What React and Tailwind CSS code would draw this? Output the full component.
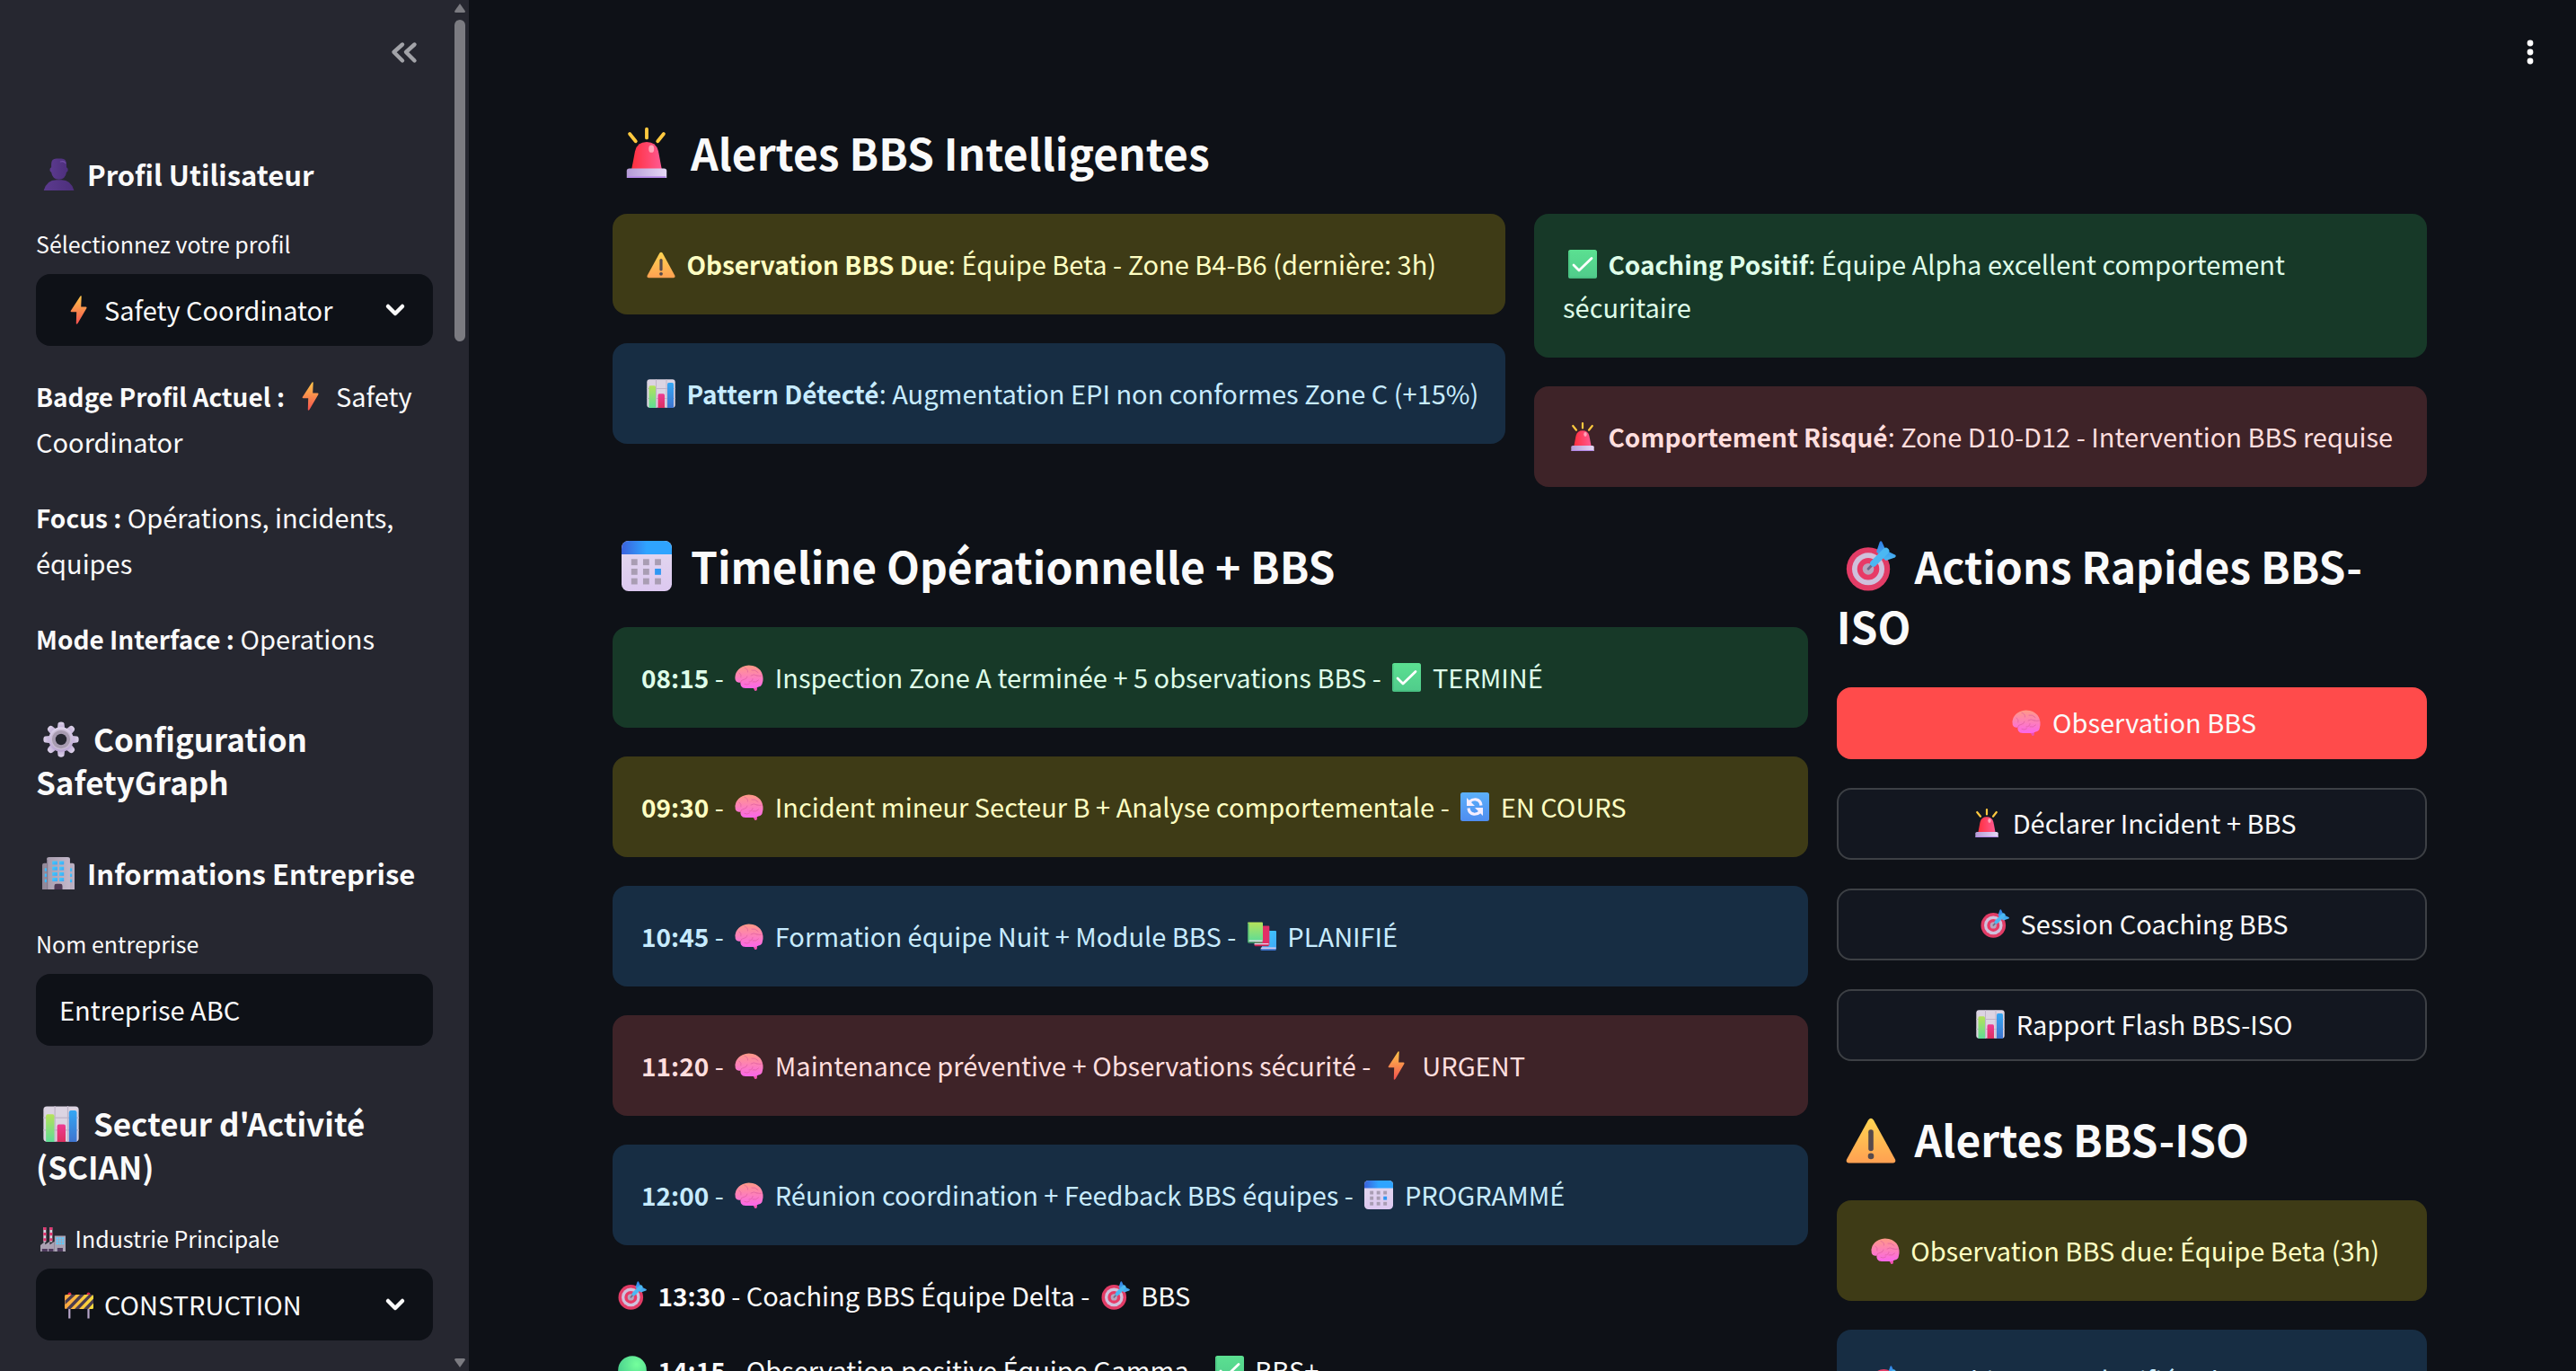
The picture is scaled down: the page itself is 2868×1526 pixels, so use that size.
import React from "react";

const stroke = { fill: "none", strokeLinecap: "round", strokeLinejoin: "round" };

const GEAR_ANGLES = [0, 45, 90, 135, 180, 225, 270, 315];
const THREE = [0, 1, 2];
const FOUR = [0, 1, 2, 3];

function Gradients() {
  const linear = (id, from, to, x2 = "0", y2 = "1") => (
    <linearGradient id={id} x1="0" y1="0" x2={x2} y2={y2}>
      <stop offset="0" stopColor={from} />
      <stop offset="1" stopColor={to} />
    </linearGradient>
  );
  return (
    <svg className="absolute size-0" aria-hidden="true">
      <defs>
        {linear("g-bust", "#5b3a8e", "#4d2f7c", "1", "0")}
        {linear("g-bolt", "#ffc64a", "#f4504f")}
        {linear("g-gear", "#ddd3ea", "#b8a3d0")}
        {linear("g-wall", "#8f8696", "#bdb2c4", "1", "0")}
        {linear("g-tower", "#a79dae", "#c3b8ca", "1", "0")}
        {linear("g-window", "#3fd0ff", "#3fa5f5", "1", "1")}
        {linear("g-green", "#b6e35a", "#5fdc96")}
        {linear("g-red", "#ee3b93", "#dc3060")}
        {linear("g-blue", "#35a7f4", "#3f74cf")}
        {linear("g-dome", "#ff2f3d", "#ff5a93", "1", "0")}
        {linear("g-base", "#b49bd6", "#e6d9f7", "1", "0")}
        {linear("g-warn", "#ffd552", "#ffa052")}
        {linear("g-check", "#5be091", "#50cb8b")}
        {linear("g-brain", "#ff9a86", "#fb66ea", "0", "1")}
        {linear("g-caltop", "#3b62dc", "#2fa4ff", ".5", "0")}
        {linear("g-cal", "#e3d9ee", "#dcc8f0")}
        {linear("g-cycle", "#5cb0fb", "#4f8df0")}
        {linear("g-bar", "#ffa63f", "#f8dc3c", "1", "0")}
        {linear("g-dart", "#2f7fe6", "#4bb8f2", "0", "1")}
        <radialGradient id="g-dot" cx=".65" cy=".3" r=".8">
          <stop offset="0" stopColor="#74ff9c" />
          <stop offset="1" stopColor="#43c98b" />
        </radialGradient>
      </defs>
    </svg>
  );
}

const DRAWINGS = {
  bust: (
    <g fill="url(#g-bust)">
      <path d="M9 6Q9 .5 14 .5H19Q24 .5 24 6V9Q25.5 9.500 25.500 11.500T24 14Q23 21 16.500 21T9 14Q7.500 13.500 7.500 11.500T9 9Z" />
      <path d="M1.500 32Q4.500 21.500 14 21.500H19Q28.500 21.500 31.500 32Z" />
      <path d="M18 3.500Q22 2.500 23 5" stroke="#7450a8" strokeWidth="1" {...stroke} />
    </g>
  ),
  bolt: (
    <path
      fill="url(#g-bolt)"
      d="M17.500.600Q18.800-.400 18.700 1L18.200 12.600H23.600Q25.200 12.800 24.300 14.200L14.500 31Q13 32.600 12.800 31L13.200 18.200H7.500Q6 18 6.900 16.700Z"
    />
  ),
  gear: (
    <g>
      <g fill="url(#g-gear)">
        {GEAR_ANGLES.map((a) => (
          <path key={a} transform={`rotate(${a} 16 16)`} d="M12.500 8L13.200 2Q13.500 .3 16 .3T18.800 2L19.500 8Z" />
        ))}
        <circle cx="16" cy="16" r="11" />
      </g>
      <circle cx="16" cy="16" r="6.800" fill="none" stroke="#a79bb0" strokeWidth="3.600" />
      <circle cx="16" cy="16" r="8.600" fill="none" stroke="#c9bcd3" strokeWidth="1" />
      <circle cx="16" cy="16" r="5" fill="#262730" />
    </g>
  ),
  building: (
    <g>
      <path fill="url(#g-wall)" d="M0 8Q0 6 2 6H30Q32 6 32 8V32H0Z" />
      <path fill="url(#g-tower)" d="M4.500 2Q4.500 0 7 0H25Q27.500 0 27.500 2V32H4.500Z" />
      <path d="M5 32V2.500" stroke="#80778a" strokeWidth="1" />
      <g fill="url(#g-window)">
        {FOUR.map((r) => (
          <g key={r}>
            <rect x="10" y={4 + r * 5.5} width="5" height="3.500" />
            <rect x="17" y={4 + r * 5.5} width="4.500" height="3.500" />
          </g>
        ))}
        {THREE.map((r) => (
          <g key={r}>
            <rect x="2.500" y={11 + r * 5.5} width="2" height="3" />
            <rect x="27.500" y={11 + r * 5.5} width="2" height="3" />
          </g>
        ))}
      </g>
      <path fill="#4d3a55" d="M12 32V28.500Q12 26.500 14 26.500H18Q20 26.500 20 28.500V32Z" />
    </g>
  ),
  chart: (
    <g>
      <rect x=".3" y=".3" width="31.400" height="31.400" rx="3" fill="#dcd4e2" />
      <path d="M10.500 0V32M22 0V32M0 10.500H32M0 21.500H32" stroke="#bfb4c8" strokeWidth="1" />
      <path fill="url(#g-green)" d="M2.500 9Q2.500 7.300 4 7.300H8.500Q10 7.300 10 9V32H3Q2.500 32 2.500 31Z" />
      <path fill="url(#g-red)" d="M12.500 18Q12.500 16.300 14 16.300H18.500Q20 16.300 20 18V32H12.500Z" />
      <path fill="url(#g-blue)" d="M23 6Q23 4 24.500 4H28.500Q30 4 30 6V32H23Z" />
    </g>
  ),
  factory: (
    <g>
      <path d="M5.500 20V1M13.500 20V1" stroke="#d9d3de" strokeWidth="3.400" />
      <path d="M5.500 1V20M13.500 1V20" stroke="#e2336f" strokeWidth="3.400" strokeDasharray="3.600 3.400" />
      <path fill="#aaa0b2" d="M0 32V24L6 19V23L12 19V23L18 19V32Z" />
      <rect x="18" y="12" width="14" height="20" fill="#a9a3b4" />
      <rect x="20" y="14" width="10" height="9" fill="#5ecbff" />
      <path d="M23.300 14V23M26.700 14V23M20 17H30M20 20H30" stroke="#a9a3b4" strokeWidth="1" />
      <path fill="#4d3a5c" d="M2 32V28.500H9V32ZM10.500 32V28.500H16.500V32ZM21.500 32V27.500H28.500V32Z" />
    </g>
  ),
  barrier: (
    <g>
      <path d="M5.300 18V31.500M26.500 18V31.500" stroke="#b6a5c9" strokeWidth="2.200" />
      <circle cx="5.500" cy="4.500" r="2" fill="#d8284c" />
      <circle cx="26.500" cy="4.500" r="2" fill="#d8284c" />
      <rect x="0" y="5" width="32" height="16" rx="1.500" fill="url(#g-bar)" />
      <path fill="#4a3c50" d="M7.500 5H12.500L.5 16V11.500ZM17 5H22L6.500 21H1.500ZM27 5H31.500L16 21H11ZM32 9.500V14.500L26 21H21Z" />
    </g>
  ),
  siren: (
    <g>
      <path d="M16 1V6.500M5.200 4L9 8.700M26.800 4L23 8.700" stroke="#ffc93f" strokeWidth="2.200" {...stroke} />
      <path fill="url(#g-dome)" d="M6.300 27L8.600 15Q10 9.200 16 9.200T23.400 15L25.700 27Z" />
      <ellipse cx="19" cy="13.500" rx="1.700" ry="2.400" fill="#ffc3cf" opacity=".75" />
      <path fill="url(#g-base)" d="M3.300 27.500Q3.300 26 5 26H27Q28.700 26 28.700 27.500V32H3.300Z" />
      <path d="M3.800 31.500H28.200" stroke="#b489ea" strokeWidth="1" />
    </g>
  ),
  warning: (
    <g>
      <path fill="url(#g-warn)" d="M14.300 3.800Q16 1.500 17.700 3.800L31.500 29Q32 31 30 31.200H2Q0 31 .5 29Z" />
      <path d="M16 11.500V22" stroke="#564a4c" strokeWidth="3.200" {...stroke} />
      <circle cx="16" cy="26.800" r="1.900" fill="#564a4c" />
    </g>
  ),
  check: (
    <g>
      <rect width="32" height="32" rx="2.500" fill="url(#g-check)" />
      <path d="M1 2V30M2 31H30" stroke="#3fae74" strokeWidth="1" opacity=".7" />
      <path d="M6 17L12 23L26 9.500" stroke="#fff" strokeWidth="2.800" {...stroke} />
    </g>
  ),
  brain: (
    <g>
      <path d="M19 25L22.500 31Q25 31.500 25 29L24.500 25Z" fill="#f04fae" />
      <path
        fill="url(#g-brain)"
        d="M7 25.500Q6 23 6.500 21.500Q2 22.500 .8 19Q-.3 15 1.500 11Q4 6 9 4Q14 1.500 20 3Q27 4.500 30 10.500Q32.500 16 31 21.500Q30.500 26 26.500 26.500Q23 28.500 19 28H12Q8.500 28 7 25.500Z"
      />
      <path
        d="M6.500 21.500Q7 18.500 10 18.500Q13.500 18 14 15M5 11Q8 13 7 16M11 5.500Q15 6.500 14.500 10M19 8Q23 7 26 10.500M18 14Q21 11.500 25 14M25 14Q28 15 30.500 14M16 21Q20 21 20 17.500M20 21Q24 22 26.500 19M11 23.500Q14 25 16.500 23"
        stroke="#dc5c9d"
        strokeWidth="1"
        opacity=".65"
        {...stroke}
      />
    </g>
  ),
  calendar: (
    <g>
      <rect width="32" height="32" rx="4.500" fill="url(#g-cal)" />
      <path fill="url(#g-caltop)" d="M0 8.600V5Q0 0 5 0H27Q32 0 32 5V8.600Z" />
      {THREE.map((r) =>
        THREE.map((c) => (
          <rect
            key={`${r}${c}`}
            x={6.2 + c * 7.5}
            y={11.6 + r * 6.1}
            width="3.900"
            height="3.900"
            fill={r === 1 && c === 2 ? "#2f97f3" : "#a99db3"}
          />
        ))
      )}
    </g>
  ),
  target: (
    <g>
      <circle cx="14.300" cy="17.900" r="13.800" fill="#e23c66" />
      <circle cx="14.300" cy="17.900" r="10.300" fill="#cfc1dc" />
      <circle cx="14.300" cy="17.900" r="7" fill="#e83a66" />
      <circle cx="14.300" cy="17.900" r="3.600" fill="#b7a5bd" />
      <path d="M14.300 17.900L18 14" stroke="#6b6b8a" strokeWidth="1.600" {...stroke} />
      <path fill="url(#g-dart)" d="M19.500 7L21.500 .8Q22.300-.3 23 .6L24.800 4.500L27.500 7L31.600 9Q32.400 9.800 31.300 10.500L25.500 12.500Z" />
      <path d="M17.600 14.300L25.500 6.500" stroke="#4bb8f2" strokeWidth="4.200" {...stroke} />
    </g>
  ),
  cycle: (
    <g>
      <rect width="32" height="32" rx="2.500" fill="url(#g-cycle)" />
      <path d="M10 10.500Q13 7.500 17 7.800Q22.500 8.500 23 14.500M22 21.500Q19 24.500 15 24.200Q9.500 23.500 9 17.500" stroke="#f5eeff" strokeWidth="3.200" fill="none" />
      <path fill="#f5eeff" d="M7 6V15H16ZM25 26V17H16Z" />
    </g>
  ),
  books: (
    <g>
      <path fill="url(#g-window)" d="M16 10H31Q32 10 32 11V30.500H16Z" />
      <path fill="#d9c9ee" d="M15 28.500H31.500V30.500H14.500Z" />
      <path fill="#3b74d4" d="M14.500 30.500H31.500V32H16Q14 32 14.500 30.500Z" />
      <path fill="#e12f67" d="M9 4.500H23.500Q24.300 4.500 24.300 5.500V26H8Z" />
      <path fill="#e6d6ee" d="M7.500 24H23.500V25.600H7.500Z" />
      <path fill="#c81f4d" d="M7.500 25.600H23.500V27.200H8.500Q7 27 7.500 25.600Z" />
      <path fill="url(#g-green)" d="M1 .5H16Q17 .5 17 1.500V21.500H0V1.500Q0 .5 1 .5Z" />
      <path fill="#d9e0e6" d="M1 20.500H16.500V22.300H1Z" />
      <path fill="#4aa86d" d="M0 2V22Q0 23.800 1.500 23.800H16.500V22.300H1.500V1Z" />
    </g>
  ),
  dot: <circle cx="16" cy="16" r="15.800" fill="url(#g-dot)" />,
};

const ICON_SIZES = {
  label: "size-7 mx-[5px] align-[-4px]",
  text: "size-8 mx-[6px] align-[-4px]",
  h3: "size-9 mx-[7px] align-[-5px]",
  h2: "size-10 mx-2 align-[-6px]",
  title: "size-14 mx-[10px] align-[-8px]",
  bare: "size-8",
};

function Icon({ name, size = "text" }) {
  return (
    <svg viewBox="0 0 32 32" aria-hidden="true" className={`inline-block overflow-visible ${ICON_SIZES[size]}`}>
      {DRAWINGS[name]}
    </svg>
  );
}

const TONES = {
  warning: "bg-[#3e3b16] text-[#ffffc2]",
  success: "bg-[#173928] text-[#dffde9]",
  info: "bg-[#172d43] text-[#c7ebff]",
  error: "bg-[#3e2328] text-[#ffdede]",
};

function Strong({ children }) {
  return <strong className="text-[28px] leading-none font-semibold">{children}</strong>;
}

function Alert({ tone, children }) {
  return <div className={`rounded-2xl pt-[31px] pr-6 pb-[33px] pl-8 leading-[48px] ${TONES[tone]}`}>{children}</div>;
}

function Title({ icon, children }) {
  return (
    <h2 className="mb-[35px] text-[48px] leading-[67px] font-semibold">
      <Icon name={icon} size="title" /> {children}
    </h2>
  );
}

function SelectField({ id, label, icon, value }) {
  return (
    <div className="flex flex-col gap-4">
      <label htmlFor={id} className="text-[25px] leading-9">
        {label}
      </label>
      <div className="relative">
        <select
          id={id}
          className="block h-20 w-full appearance-none rounded-2xl bg-[#0e1117] pr-20 pb-0.5 pl-[76px] text-[29px] leading-[48px] outline-none"
        >
          <option>{value}</option>
        </select>
        <span className="pointer-events-none absolute inset-y-0 left-8 flex items-center">
          <Icon name={icon} size="bare" />
        </span>
        <svg viewBox="0 0 24 16" className="pointer-events-none absolute top-8 right-[30px] h-4 w-6" aria-hidden="true">
          <path d="M4 4L12 12L20 4" stroke="#fafafa" strokeWidth="4.500" {...stroke} />
        </svg>
      </div>
    </div>
  );
}

function Sidebar() {
  return (
    <aside className="flex h-full w-[522px] shrink-0 bg-[#262730]">
      <div className="flex min-w-0 flex-1 flex-col overflow-hidden pl-10">
        <div className="flex h-[172px] shrink-0 items-start justify-end pt-[38px] pr-8">
          <button type="button" aria-label="Réduire la barre latérale" className="size-10">
            <svg viewBox="0 0 40 40" className="size-10">
              <path d="M18 11.500L8.500 20L18 29.500M31.500 11.500L22 20L31.500 29.500" stroke="#a2a3a8" strokeWidth="4.400" {...stroke} />
            </svg>
          </button>
        </div>
        <div className="pr-5">
          <h3 className="mb-[37px] text-[31px] leading-11 font-semibold">
            <Icon name="bust" size="h3" /> Profil Utilisateur
          </h3>
          <SelectField id="profil" label="Sélectionnez votre profil" icon="bolt" value="Safety Coordinator" />
          <div className="mt-[30px] flex flex-col gap-[33px] leading-[51px]">
            <p>
              <Strong>Badge Profil Actuel :</Strong> <Icon name="bolt" /> Safety Coordinator
            </p>
            <p>
              <Strong>Focus :</Strong> Opérations, incidents, équipes
            </p>
            <p>
              <Strong>Mode Interface :</Strong> Operations
            </p>
          </div>
          <h2 className="mt-[62px] mb-14 text-[35px] leading-12 font-semibold">
            <Icon name="gear" size="h2" /> Configuration SafetyGraph
          </h2>
          <h3 className="mb-[38px] text-[31px] leading-11 font-semibold whitespace-nowrap">
            <Icon name="building" size="h3" /> Informations Entreprise
          </h3>
          <div className="flex flex-col gap-4">
            <label htmlFor="nom" className="text-[25px] leading-9">
              Nom entreprise
            </label>
            <input
              id="nom"
              type="text"
              defaultValue="Entreprise ABC"
              className="h-20 w-full rounded-2xl bg-[#0e1117] px-[26px] pb-0.5 text-[29px] outline-none"
            />
          </div>
          <h2 className="mt-[62px] mb-[38px] text-[35px] leading-12 font-semibold">
            <Icon name="chart" size="h2" /> Secteur d'Activité (SCIAN)
          </h2>
          <SelectField
            id="industrie"
            label={
              <>
                <Icon name="factory" size="label" /> Industrie Principale
              </>
            }
            icon="barrier"
            value="CONSTRUCTION"
          />
        </div>
      </div>
      <div className="flex w-5 flex-col items-center gap-2 py-1" aria-hidden="true">
        <svg viewBox="0 0 12 10" className="h-2.5 w-3">
          <path d="M6 0L12 8.500Q12 10 10.500 10H1.500Q0 10 0 8.500Z" fill="#7b7b81" />
        </svg>
        <div className="h-[358px] w-3 rounded-full bg-[#7b7b81]" />
        <svg viewBox="0 0 12 10" className="mt-auto h-2.5 w-3">
          <path d="M6 10L12 1.500Q12 0 10.500 0H1.500Q0 0 0 1.500Z" fill="#7b7b81" />
        </svg>
      </div>
    </aside>
  );
}

const TIMELINE = [
  { tone: "success", time: "08:15", text: "Inspection Zone A terminée + 5 observations BBS", icon: "check", status: "TERMINÉ" },
  { tone: "warning", time: "09:30", text: "Incident mineur Secteur B + Analyse comportementale", icon: "cycle", status: "EN COURS" },
  { tone: "info", time: "10:45", text: "Formation équipe Nuit + Module BBS", icon: "books", status: "PLANIFIÉ" },
  { tone: "error", time: "11:20", text: "Maintenance préventive + Observations sécurité", icon: "bolt", status: "URGENT" },
  { tone: "info", time: "12:00", text: "Réunion coordination + Feedback BBS équipes", icon: "calendar", status: "PROGRAMMÉ" },
];

const ACTIONS = [
  { icon: "brain", text: "Observation BBS", style: "border-[#ff4b4b] bg-[#ff4b4b]" },
  { icon: "siren", text: "Déclarer Incident + BBS", style: "border-[#3d4045] bg-[#131720]" },
  { icon: "target", text: "Session Coaching BBS", style: "border-[#3d4045] bg-[#131720]" },
  { icon: "chart", text: "Rapport Flash BBS-ISO", style: "border-[#3d4045] bg-[#131720]" },
];

export default function App() {
  return (
    <div className="flex h-screen overflow-hidden bg-[#0e1117] font-['Noto_Sans_CJK_JP','Noto_Sans',sans-serif] text-[29px] text-[#fafafa]">
      <Gradients />
      <Sidebar />
      <div className="relative min-w-0 flex-1 overflow-hidden">
        <button type="button" aria-label="Menu" className="absolute top-[38px] right-[31px] size-10">
          <svg viewBox="0 0 40 40" className="size-10" fill="#fff">
            <circle cx="20" cy="10" r="3.400" />
            <circle cx="20" cy="20" r="3.400" />
            <circle cx="20" cy="30" r="3.400" />
          </svg>
        </button>
        <main className="pt-[136px] pr-[166px] pl-40">
          <section>
            <Title icon="siren">Alertes BBS Intelligentes</Title>
            <div className="grid grid-cols-2 items-start gap-8">
              <div className="flex flex-col gap-8">
                <Alert tone="warning">
                  <Icon name="warning" /> <Strong>Observation BBS Due</Strong>: Équipe Beta - Zone B4-B6 (dernière: 3h)
                </Alert>
                <Alert tone="info">
                  <Icon name="chart" /> <Strong>Pattern Détecté</Strong>: Augmentation EPI non conformes Zone C (+15%)
                </Alert>
              </div>
              <div className="flex flex-col gap-8">
                <Alert tone="success">
                  <Icon name="check" /> <Strong>Coaching Positif</Strong>: Équipe Alpha excellent comportement sécuritaire
                </Alert>
                <Alert tone="error">
                  <Icon name="siren" /> <Strong>Comportement Risqué</Strong>: Zone D10-D12 - Intervention BBS requise
                </Alert>
              </div>
            </div>
          </section>
          <div className="mt-[54px] flex items-start gap-8">
            <section className="w-[calc(66.6667%-16px)] shrink-0">
              <Title icon="calendar">Timeline Opérationnelle + BBS</Title>
              <div className="flex flex-col gap-8">
                {TIMELINE.map((e) => (
                  <Alert key={e.time} tone={e.tone}>
                    <Strong>{e.time}</Strong> - <Icon name="brain" /> {e.text} - <Icon name={e.icon} /> {e.status}
                  </Alert>
                ))}
              </div>
              <div className="mt-[30px] flex flex-col gap-8 leading-[51px]">
                <p>
                  <Icon name="target" /> <Strong>13:30</Strong> - Coaching BBS Équipe Delta - <Icon name="target" /> BBS
                </p>
                <p>
                  <Icon name="dot" /> <Strong>14:15</Strong> - Observation positive Équipe Gamma - <Icon name="check" /> BBS+
                </p>
              </div>
            </section>
            <section className="min-w-0 flex-1">
              <Title icon="target">Actions Rapides BBS-ISO</Title>
              <div className="mb-[53px] flex flex-col gap-8">
                {ACTIONS.map((a) => (
                  <button key={a.text} type="button" className={`h-20 w-full rounded-2xl border-2 pb-0.5 ${a.style}`}>
                    <Icon name={a.icon} /> {a.text}
                  </button>
                ))}
              </div>
              <Title icon="warning">Alertes BBS-ISO</Title>
              <div className="flex flex-col gap-8">
                <Alert tone="warning">
                  <Icon name="brain" /> Observation BBS due: Équipe Beta (3h)
                </Alert>
                <Alert tone="info">
                  <Icon name="target" /> Coaching BBS planifié 14h
                </Alert>
              </div>
            </section>
          </div>
        </main>
      </div>
    </div>
  );
}
